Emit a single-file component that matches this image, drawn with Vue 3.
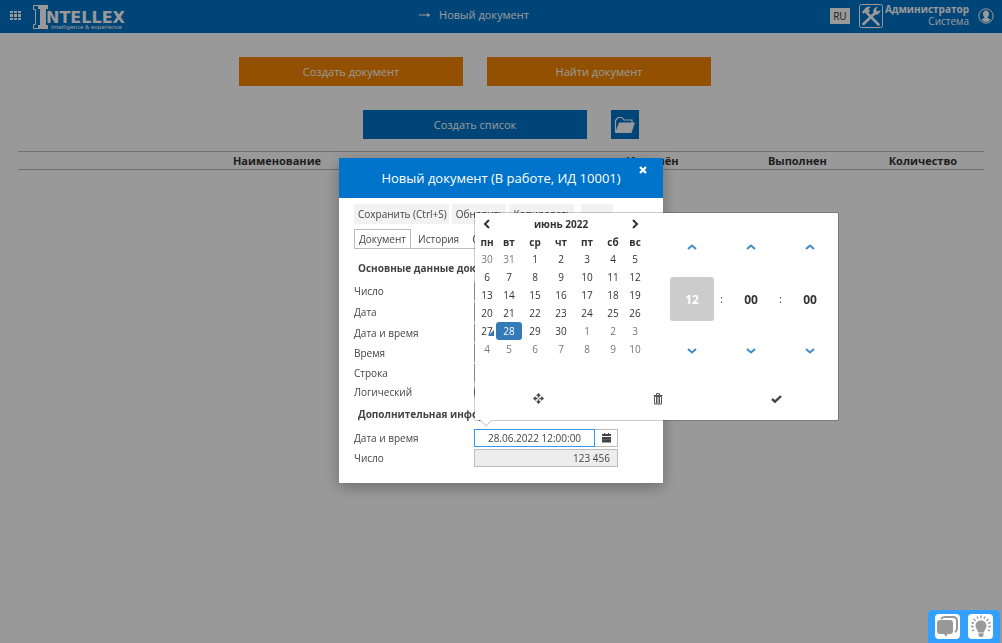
<script setup>
import { ref } from 'vue'

const columns = [
  { title: 'Наименование', cls: 'c-name' },
  { title: '', cls: 'c-gap' },
  { title: 'Изменён', cls: 'c-date' },
  { title: 'Выполнен', cls: 'c-date' },
  { title: 'Количество', cls: 'c-count' },
  { title: '', cls: 'c-end' },
]
const actions = ['Сохранить (Ctrl+S)', 'Обновить', 'Копировать', '…']
const tabs = ['Документ', 'История', 'Связи']
const fields = [
  { id: 'f-number', label: 'Число', kind: 'text' },
  { id: 'f-date', label: 'Дата', kind: 'date' },
  { id: 'f-datetime', label: 'Дата и время', kind: 'date' },
  { id: 'f-time', label: 'Время', kind: 'text' },
  { id: 'f-string', label: 'Строка', kind: 'text' },
]
const weekdays = ['пн', 'вт', 'ср', 'чт', 'пт', 'сб', 'вс']
const weeks = Array.from({ length: 6 }, (_, w) =>
  Array.from({ length: 7 }, (_, d) => {
    const date = new Date(2022, 4, 30 + w * 7 + d)
    const current = date.getMonth() === 5
    return {
      n: date.getDate(),
      other: !current,
      today: current && date.getDate() === 27,
      active: current && date.getDate() === 28,
    }
  })
)
const time = ['12', '00', '00']
const units = ['часы', 'минуты', 'секунды']
const dateTime = ref('28.06.2022 12:00:00')
const total = ref('123 456')
</script>

<template>
  <div class="page">
    <header class="top">
      <button class="plain grid-btn" aria-label="Меню">
        <svg width="12" height="10" viewBox="0 0 12 10" fill="#fff">
          <path d="M0 0h3v2H0zM4 0h3v2H4zM8 0h3v2H8zM0 3h3v3H0zM4 3h3v3H4zM8 3h3v3H8zM0 7h3v2H0zM4 7h3v2H4zM8 7h3v2H8z" />
        </svg>
      </button>
      <a href="#" class="logo" aria-label="Intellex">
        <svg width="94" height="26" viewBox="0 0 94 26" fill="#fff">
          <path d="M5 0h10v4h-2v16h2v4H5v-4h2V4H5z" />
          <path d="M5.500 .500H.500v4H2.500v15H.500v4H5.500" fill="none" stroke="#fff" />
          <text x="13" y="18" class="logo-name">NTELLEX</text>
          <text x="18" y="24" class="logo-tag">intelligence &amp; experience</text>
        </svg>
      </a>
      <div class="crumb">
        <svg width="12" height="6" viewBox="0 0 12 6" fill="#fff"><path d="M0 2.500h8V1l3.500 2L8 5V3.500H0z" /></svg>
        <span>Новый документ</span>
      </div>
      <div class="account">
        <button class="plain lang">RU</button>
        <button class="plain tools" aria-label="Настройки">
          <svg width="24" height="24" viewBox="0 0 24 24">
            <rect x=".5" y=".5" width="23" height="23" rx="2" fill="none" stroke="#fff" />
            <path d="M8 9L19.500 20.500M16 9L4.500 20" stroke="#fff" stroke-width="2.600" stroke-linecap="round" />
            <path d="M3 8l4-4.500Q10 2 12 3L9.500 5l1.500 2-3 3-2-1.500L4.500 10z" fill="#fff" />
            <path d="M14.500 9.500Q13.500 5 17 3.200l2-.4L17 5.500l1.500 2L21.500 6Q21 10.500 16.500 11z" fill="#fff" />
          </svg>
        </button>
        <div class="who"><b>Администратор</b><span>Система</span></div>
        <button class="plain avatar" aria-label="Профиль">
          <svg width="16" height="16" viewBox="0 0 16 16">
            <circle cx="8" cy="8" r="7.200" fill="none" stroke="#fff" />
            <path d="M8 2.500c2 0 3 1.300 3 3.200 0 1.500-.6 2.600-1.400 3.300v1l3 1.400Q11 14 8 14t-4.600-2.600l3-1.400V9C5.600 8.300 5 7.200 5 5.700c0-1.900 1-3.200 3-3.200z" fill="#fff" />
          </svg>
        </button>
      </div>
    </header>

    <main class="content">
      <div class="row-btns">
        <button class="plain big orange">Создать документ</button>
        <button class="plain big orange">Найти документ</button>
      </div>
      <div class="row-btns">
        <button class="plain big blue">Создать список</button>
        <button class="plain folder" aria-label="Открыть папку">
          <svg width="22" height="18" viewBox="0 0 22 18">
            <path d="M1.500 16V4.500L4 1.500h4L10 4h8v3" fill="none" stroke="#fff" stroke-width="1.200" />
            <path d="M5 6.500h16L17.500 17H1z" fill="#fff" />
          </svg>
        </button>
      </div>
      <table class="list">
        <thead>
          <tr><th v-for="(c, i) in columns" :key="i" :class="c.cls">{{ c.title }}</th></tr>
        </thead>
      </table>
    </main>

    <div class="overlay">
      <section class="dialog" role="dialog" aria-labelledby="dlg-title">
        <div class="dlg-head">
          <h1 id="dlg-title">Новый документ (В работе, ИД 10001)</h1>
          <button class="plain close" aria-label="Закрыть">
            <svg width="8" height="8" viewBox="0 0 8 8"><path d="M1 1l6 6M7 1L1 7" stroke="#fff" stroke-width="2.200" /></svg>
          </button>
        </div>
        <div class="dlg-body">
          <div class="actions">
            <button v-for="a in actions" :key="a" class="plain action">{{ a }}</button>
          </div>
          <div class="tabs">
            <button v-for="(t, i) in tabs" :key="t" class="plain tab" :class="{ on: i === 0 }">{{ t }}</button>
          </div>
          <h2>Основные данные документа</h2>
          <div v-for="f in fields" :key="f.id" class="field" :class="f.kind">
            <label :for="f.id">{{ f.label }}</label>
            <input :id="f.id" type="text" />
          </div>
          <div class="field check">
            <label for="f-bool">Логический</label>
            <input id="f-bool" type="checkbox" />
          </div>
          <h2 class="second">Дополнительная информация</h2>
          <div class="field">
            <label for="f-dt2">Дата и время</label>
            <div class="picker">
              <input id="f-dt2" v-model="dateTime" type="text" class="focused" />
              <button class="plain cal-btn" aria-label="Календарь">
                <svg width="9" height="10" viewBox="0 0 9 10" fill="#444"><path d="M0 1h2V0h1v1h3V0h1v1h2v2H0zM0 4h9v5.500H0z" /><path d="M0 6.500h9" stroke="#777" stroke-width=".5" /></svg>
              </button>

              <div class="popup">
                <div class="panes">
                  <table class="cal">
                    <colgroup><col class="edge" /><col v-for="n in 5" :key="n" class="mid" /><col class="edge" /></colgroup>
                    <thead>
                      <tr class="month">
                        <th><button class="plain nav" aria-label="Предыдущий месяц"><svg width="8" height="10" viewBox="0 0 8 10"><path d="M6 1L2 5l4 4" fill="none" stroke="#333" stroke-width="2" /></svg></button></th>
                        <th colspan="5">июнь 2022</th>
                        <th><button class="plain nav" aria-label="Следующий месяц"><svg width="8" height="10" viewBox="0 0 8 10"><path d="M2 1l4 4-4 4" fill="none" stroke="#333" stroke-width="2" /></svg></button></th>
                      </tr>
                      <tr class="days"><th v-for="d in weekdays" :key="d">{{ d }}</th></tr>
                    </thead>
                    <tbody>
                      <tr v-for="(w, i) in weeks" :key="i">
                        <td v-for="(d, j) in w" :key="j" :class="{ other: d.other, today: d.today, active: d.active }">{{ d.n }}</td>
                      </tr>
                    </tbody>
                  </table>
                  <div class="clock">
                    <template v-for="(t, i) in time" :key="i">
                      <span v-if="i" class="sep">:</span>
                      <div class="unit">
                        <button class="plain step" :aria-label="'Больше: ' + units[i]"><svg width="10" height="6" viewBox="0 0 10 6"><path d="M1 5l4-3.500L9 5" fill="none" stroke="#428bca" stroke-width="2" /></svg></button>
                        <button class="plain value" :class="{ hot: i === 0 }">{{ t }}</button>
                        <button class="plain step" :aria-label="'Меньше: ' + units[i]"><svg width="10" height="6" viewBox="0 0 10 6"><path d="M1 1l4 3.500L9 1" fill="none" stroke="#428bca" stroke-width="2" /></svg></button>
                      </div>
                    </template>
                  </div>
                </div>
                <div class="foot">
                  <button class="plain" aria-label="Сейчас">
                    <svg width="11" height="11" viewBox="0 0 11 11" fill="#444"><path d="M5.500 0L8 2.700H6.300v1.800H4.700V2.700H3zM5.500 11L3 8.300h1.700V6.500h1.600v1.800H8zM0 5.500L2.700 3v1.700h1.800v1.600H2.700V8zM11 5.500L8.300 8V6.300H6.500V4.700h1.800V3z" /></svg>
                  </button>
                  <button class="plain" aria-label="Очистить">
                    <svg width="10" height="12" viewBox="0 0 10 12"><path d="M3.500 2V.6h3V2M.5 2.500h9M1.500 3.500h7v7.500h-7zM3.500 4v6.500M5 4v6.500M6.500 4v6.500" fill="none" stroke="#444" stroke-width=".9" /></svg>
                  </button>
                  <button class="plain" aria-label="Готово">
                    <svg width="11" height="8" viewBox="0 0 11 8"><path d="M1 4l3 2.700L10 1" fill="none" stroke="#444" stroke-width="2.400" /></svg>
                  </button>
                </div>
              </div>
            </div>
          </div>
          <div class="field">
            <label for="f-num2">Число</label>
            <input id="f-num2" v-model="total" type="text" class="locked" readonly />
          </div>
        </div>
      </section>
    </div>

    <aside class="helper">
      <button class="plain" aria-label="Чат">
        <svg width="25" height="25" viewBox="0 0 25 25">
          <path d="M6 5Q7 3 10 3h8q4 0 4 4v7q0 3-2 4" fill="none" stroke="#999" stroke-width="2" />
          <path d="M5 6h10q3 0 3 3v8q0 3-3 3h-2.500L11 23 9 20H5q-3 0-3-3V9q0-3 3-3z" fill="#999" />
        </svg>
      </button>
      <button class="plain" aria-label="Подсказка">
        <svg width="25" height="25" viewBox="0 0 25 25">
          <path d="M13 6.500c3.500 0 5.500 2.500 5.500 5.300 0 2.700-2 4-2.700 6.700h-5.600c-.7-2.700-2.700-4-2.700-6.700 0-2.800 2-5.300 5.500-5.300zM10.500 19.200h5v2.300L14 23h-2l-1.500-1.500z" fill="#999" />
          <path d="M13 1.500v2.700M9 2.500l1 2.300M17 2.500l-1 2.300M5.500 5L7.500 7M20.500 5l-2 2M3.500 8.500l2.500 1M22.500 8.500l-2.500 1M3 12.500h2.800M23 12.500h-2.800M4 17l2-1.200M22 17l-2-1.200" stroke="#999" stroke-width="1.400" />
        </svg>
      </button>
    </aside>
  </div>
</template>

<style>
body {
  background: #fff;
}
</style>

<style scoped>
* {
  box-sizing: border-box;
}
.page {
  min-height: 100vh;
  font-family: "Open Sans", "Noto Sans", sans-serif;
  font-size: 10px;
  color: #444;
}
.plain {
  display: flex;
  align-items: center;
  justify-content: center;
  margin: 0;
  padding: 0;
  border: 0;
  background: none;
  font: inherit;
  color: inherit;
  cursor: pointer;
}
svg {
  display: block;
  flex: none;
}
.top {
  display: grid;
  grid-template-columns: auto 1fr auto;
  align-items: center;
  height: 33px;
  padding: 0 8px 1px 10px;
  background: #0073c8;
  color: #fff;
}
.top > * {
  grid-row: 1;
}
.grid-btn {
  grid-column: 1;
}
.logo {
  grid-column: 2;
  justify-self: start;
  margin: 4px 0 0 11px;
}
.logo-name {
  font: bold 16px "DejaVu Sans", sans-serif;
}
.logo-tag {
  font: 6px "Noto Sans", sans-serif;
}
.crumb {
  grid-column: 1 / -1;
  justify-self: center;
  display: flex;
  align-items: center;
  gap: 8px;
  margin-right: 56px;
  padding-bottom: 2px;
  font-size: 11px;
  line-height: 16px;
}
.account {
  grid-column: 3;
  display: flex;
  align-items: center;
}
.lang {
  width: 20px;
  height: 16px;
  margin-right: 9px;
  background: #fff;
  color: #333;
}
.who {
  display: flex;
  flex-direction: column;
  align-items: flex-end;
  margin: 0 9px 2px 2px;
  line-height: 12px;
}
.content {
  padding: 24px 18px 0;
}
.row-btns {
  display: flex;
  justify-content: center;
  gap: 24px;
  margin-bottom: 24px;
  padding-right: 52px;
}
.row-btns + .row-btns {
  margin-bottom: 12px;
  padding-right: 0;
}
.big {
  width: 224px;
  height: 29px;
  font-size: 11px;
  color: #fff;
}
.orange {
  background: #f48600;
}
.blue,
.folder {
  background: #0073c8;
}
.folder {
  width: 28px;
  height: 29px;
}
.list {
  width: 100%;
  table-layout: fixed;
  border-collapse: collapse;
  font-size: 11px;
  line-height: 17px;
  color: #333;
}
.list th {
  padding: 0;
  border: solid #bbb;
  border-width: 1px 0;
}
.c-name {
  width: 518px;
}
.c-gap {
  width: 44px;
}
.c-date {
  width: 15%;
}
.c-count {
  width: 11%;
}
.overlay {
  position: fixed;
  inset: 0;
  display: flex;
  align-items: center;
  justify-content: center;
  padding-bottom: 2px;
  background: rgba(0, 0, 0, 0.4);
}
.dialog {
  width: 324px;
  padding-bottom: 15px;
  background: #fff;
  box-shadow: 0 4px 14px rgba(0, 0, 0, 0.3);
}
.dlg-head {
  position: relative;
  display: flex;
  align-items: center;
  justify-content: center;
  height: 40px;
  background: #0073cb;
  color: #fff;
}
h1,
h2 {
  margin: 0;
}
h1 {
  font-size: 13px;
  font-weight: 400;
}
.close {
  position: absolute;
  top: 4px;
  right: 12px;
  width: 16px;
  height: 16px;
}
.dlg-body {
  padding: 6px 45px 0 15px;
}
.actions {
  display: flex;
  gap: 3px;
  margin-right: -30px;
}
.action {
  height: 20px;
  padding: 0 2px 0 4px;
  background: #f2f2f2;
}
.action:last-child {
  width: 32px;
  margin-left: 4px;
}
.tabs {
  display: flex;
  margin: 5px -30px 0 0;
  border-bottom: 1px solid #bbb;
}
.tab {
  height: 19px;
  padding: 0 6px 0 7px;
}
.tab.on {
  height: 20px;
  margin-bottom: -1px;
  padding: 0 4px;
  border: 1px solid #bbb;
}
h2 {
  padding: 12px 0 5px 4px;
  font-size: 10px;
  line-height: 15px;
  white-space: nowrap;
}
h2.second {
  padding: 7px 0 6px 4px;
}
.field {
  display: flex;
  align-items: center;
  height: 20px;
}
.field.date {
  height: 21px;
}
.field.check {
  height: 17px;
}
.field label {
  width: 120px;
}
.field input[type="text"] {
  flex: 1;
  min-width: 0;
  height: 18px;
  padding: 0 7px;
  border: 1px solid #aaa;
  border-radius: 0;
  background: #fff;
  font: inherit;
  color: inherit;
  outline: 0;
}
.field input[type="checkbox"] {
  width: 12px;
  height: 12px;
  margin: 0;
}
.field .locked[type="text"] {
  border-color: #bbb;
  background: #ededed;
  text-align: right;
}
.picker {
  position: relative;
  display: flex;
  flex: 1;
  min-width: 0;
}
.field .focused[type="text"] {
  border-color: #3399ee;
  text-align: center;
}
.cal-btn {
  width: 23px;
  border: 1px solid #bbb;
  border-left: 0;
}
.popup {
  position: absolute;
  bottom: calc(100% + 8px);
  left: 0;
  width: 365px;
  border: 1px solid rgba(0, 0, 0, 0.2);
  border-radius: 2px;
  background: #fff;
  background-clip: padding-box;
  color: #333;
}
.popup::after {
  content: "";
  position: absolute;
  bottom: -5px;
  left: 7px;
  width: 7px;
  height: 7px;
  border: solid #ccc;
  border-width: 0 1px 1px 0;
  background: #fff;
  transform: rotate(45deg);
}
.panes {
  display: flex;
  padding: 1px 3px 0;
}
.cal {
  width: 166px;
  table-layout: fixed;
  border-collapse: separate;
  border-spacing: 0;
  align-self: flex-start;
  text-align: center;
  line-height: 18px;
}
.edge {
  width: 18px;
}
.mid {
  width: 26px;
}
.cal th,
.cal td {
  padding: 0;
  position: relative;
}
.month {
  line-height: 20px;
}
.days {
  line-height: 16px;
}
.nav {
  width: 100%;
}
.cal .other {
  color: #777;
}
.cal .today::after {
  content: "";
  position: absolute;
  right: 2px;
  bottom: 4px;
  border: solid transparent;
  border-width: 0 0 6px 6px;
  border-bottom-color: #337ab7;
}
.cal .active {
  border-radius: 3px;
  background: #337ab7;
  color: #fff;
}
.clock {
  display: flex;
  flex: 1;
  align-items: center;
  justify-content: flex-end;
  padding: 7px 3px 0 0;
}
.unit {
  width: 44px;
}
.sep {
  width: 15px;
  text-align: center;
}
.step {
  width: 44px;
  height: 52px;
}
.value {
  width: 44px;
  height: 44px;
  margin: 4px 0;
  border-radius: 3px;
  font-size: 12px;
  font-weight: 700;
}
.hot {
  background: #ccc;
  color: #fff;
}
.foot {
  display: grid;
  grid-template-columns: repeat(3, 1fr);
  justify-items: center;
  height: 43px;
  padding: 0 2px 0 4px;
}
.helper {
  position: fixed;
  right: 2px;
  bottom: 0;
  display: flex;
  gap: 8px;
  padding: 4px 7px;
  border-radius: 4px 4px 0 0;
  background: #33a0ff;
}
.helper .plain {
  border-radius: 4px;
  background: #fff;
}
</style>
